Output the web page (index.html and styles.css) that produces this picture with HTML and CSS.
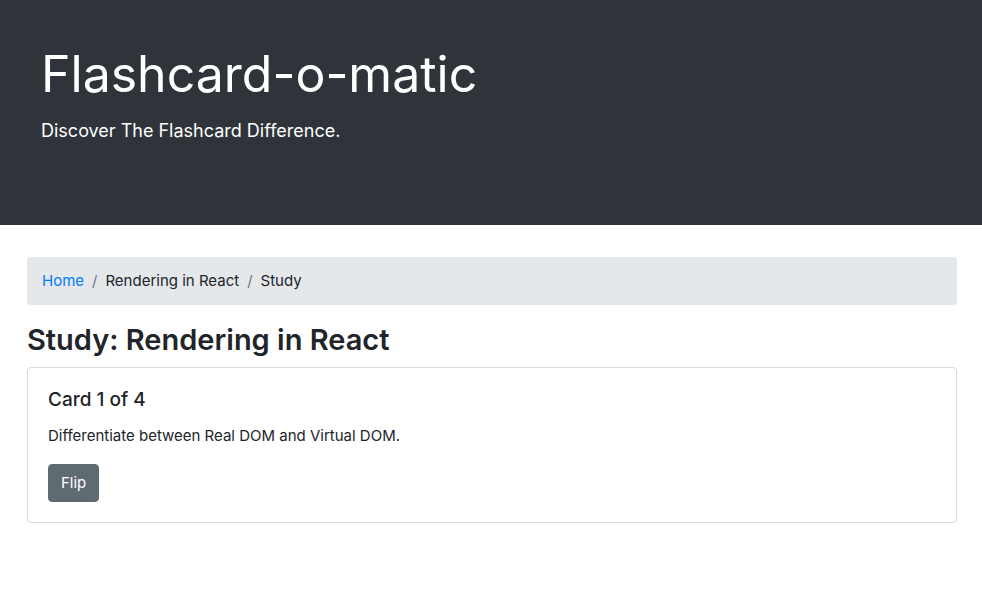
FILE: index.html
```html
<!DOCTYPE html>
<html lang="en">
<head>
<meta charset="utf-8">
<meta name="viewport" content="width=device-width, initial-scale=1">
<title>Flashcard-o-matic</title>
<link rel="stylesheet" href="styles.css">
</head>
<body>
<header class="hero">
  <div class="container hero-inner">
    <h1 class="hero-title">Flashcard-o-matic</h1>
    <p class="hero-lead">Discover The Flashcard Difference.</p>
  </div>
</header>
<main class="container">
  <nav aria-label="Breadcrumb">
    <ol class="breadcrumb">
      <li><a href="#">Home</a></li>
      <li>Rendering in React</li>
      <li aria-current="page">Study</li>
    </ol>
  </nav>
  <h2 class="page-title">Study: Rendering in React</h2>
  <section class="card">
    <h5 class="card-title">Card 1 of 4</h5>
    <p class="card-text">Differentiate between Real DOM and Virtual DOM.</p>
    <button class="btn" type="button">Flip</button>
  </section>
</main>
</body>
</html>
```
FILE: styles.css
```css
* {
  box-sizing: border-box;
}

body {
  margin: 0;
  background: #fff;
  color: #212529;
  font-family: Inter, "Liberation Sans", sans-serif;
  font-size: 15px;
  line-height: 24px;
}

h1, h2, h5, p, ol {
  margin: 0;
}

.container {
  max-width: 960px;
  margin: 0 auto;
  padding: 0 14px 0 16px;
}

.hero {
  padding: 41px 0 79px;
  margin-bottom: 32px;
  background: #2f333a;
  color: #fff;
}

.hero-inner {
  padding: 0 30px;
}

.hero-title {
  margin-bottom: 8px;
  font-size: 50px;
  font-weight: 400;
  line-height: 67px;
}

.hero-lead {
  font-size: 18px;
  font-weight: 400;
  line-height: 30px;
}

.breadcrumb {
  display: flex;
  flex-wrap: wrap;
  gap: 8px;
  margin-bottom: 16px;
  padding: 12px 15px;
  border-radius: 4px;
  background: #e4e8eb;
  list-style: none;
}

.breadcrumb li {
  display: flex;
  gap: 8px;
}

.breadcrumb li + li::before {
  content: "/";
  color: #6c757d;
}

.breadcrumb a {
  color: #007bff;
  text-decoration: none;
}

.page-title {
  margin-bottom: 8px;
  font-size: 29px;
  font-weight: 600;
  line-height: 38px;
}

.card {
  padding: 20px;
  border: 1px solid #d9dadb;
  border-radius: 4px;
}

.card-title {
  margin-bottom: 12px;
  font-size: 19px;
  font-weight: 500;
  line-height: 24px;
}

.card-text {
  margin-bottom: 16px;
}

.btn {
  display: block;
  padding: 6px 12px;
  border: 1px solid #5f6a71;
  border-radius: 4px;
  background: #5f6a71;
  color: #fff;
  font: inherit;
}
```
